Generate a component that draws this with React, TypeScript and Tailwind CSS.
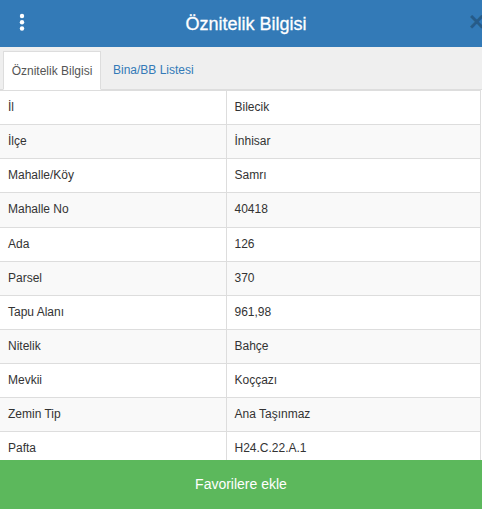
import React from "react";

const rows: [string, string][] = [
  ["İl", "Bilecik"],
  ["İlçe", "İnhisar"],
  ["Mahalle/Köy", "Samrı"],
  ["Mahalle No", "40418"],
  ["Ada", "126"],
  ["Parsel", "370"],
  ["Tapu Alanı", "961,98"],
  ["Nitelik", "Bahçe"],
  ["Mevkii", "Koççazı"],
  ["Zemin Tip", "Ana Taşınmaz"],
  ["Pafta", "H24.C.22.A.1"],
];

export default function App() {
  return (
    <div
      className="w-[482px] h-[509px] flex flex-col overflow-hidden bg-white text-[#333]"
      style={{ fontFamily: '"Liberation Sans", Arial, sans-serif' }}
    >
      <div className="relative h-[47px] shrink-0 bg-[#337ab7] flex items-center justify-center pl-[10px] overflow-hidden">
        <svg className="absolute left-[19px] top-[13px]" width="6" height="20" viewBox="0 0 6 20">
          <circle cx="3" cy="3" r="2.2" fill="#fff" />
          <circle cx="3" cy="9.3" r="2.2" fill="#fff" />
          <circle cx="3" cy="15.5" r="2.2" fill="#fff" />
        </svg>
        <span className="text-white text-[18px] leading-none [-webkit-text-stroke:0.3px_#fff]">Öznitelik Bilgisi</span>
        <span className="absolute left-[469px] top-[9px] text-[27px] font-bold leading-none text-black/25">×</span>
      </div>
      <div className="flex-1 overflow-hidden">
        <div className="h-[43px] bg-[#efefef] border-b border-[#ddd] flex items-end pl-[3px]">
          <div className="w-[98px] h-[39px] -mb-px bg-white border border-[#ddd] border-b-white flex items-center justify-center text-[12px] text-[#555] whitespace-nowrap">
            Öznitelik Bilgisi
          </div>
          <div className="h-[39px] pl-[12px] flex items-center text-[12px] text-[#337ab7]">
            Bina/BB Listesi
          </div>
        </div>
        <table className="w-[481px] border-collapse border-r border-[#ddd] text-[12px] leading-[1.42857]">
          <tbody>
            {rows.map(([k, v], i) => (
              <tr key={k} className={i % 2 === 1 ? "bg-[#f9f9f9]" : "bg-white"}>
                <td className="w-[226px] border-t border-r border-[#ddd] px-2 py-2 text-[#333]">{k}</td>
                <td className="border-t border-[#ddd] px-2 py-2 text-[#333]">{v}</td>
              </tr>
            ))}
          </tbody>
        </table>
      </div>
      <div className="h-[49px] shrink-0 bg-[#5cb85c] flex items-center justify-center text-white text-[14px]">
        Favorilere ekle
      </div>
    </div>
  );
}
